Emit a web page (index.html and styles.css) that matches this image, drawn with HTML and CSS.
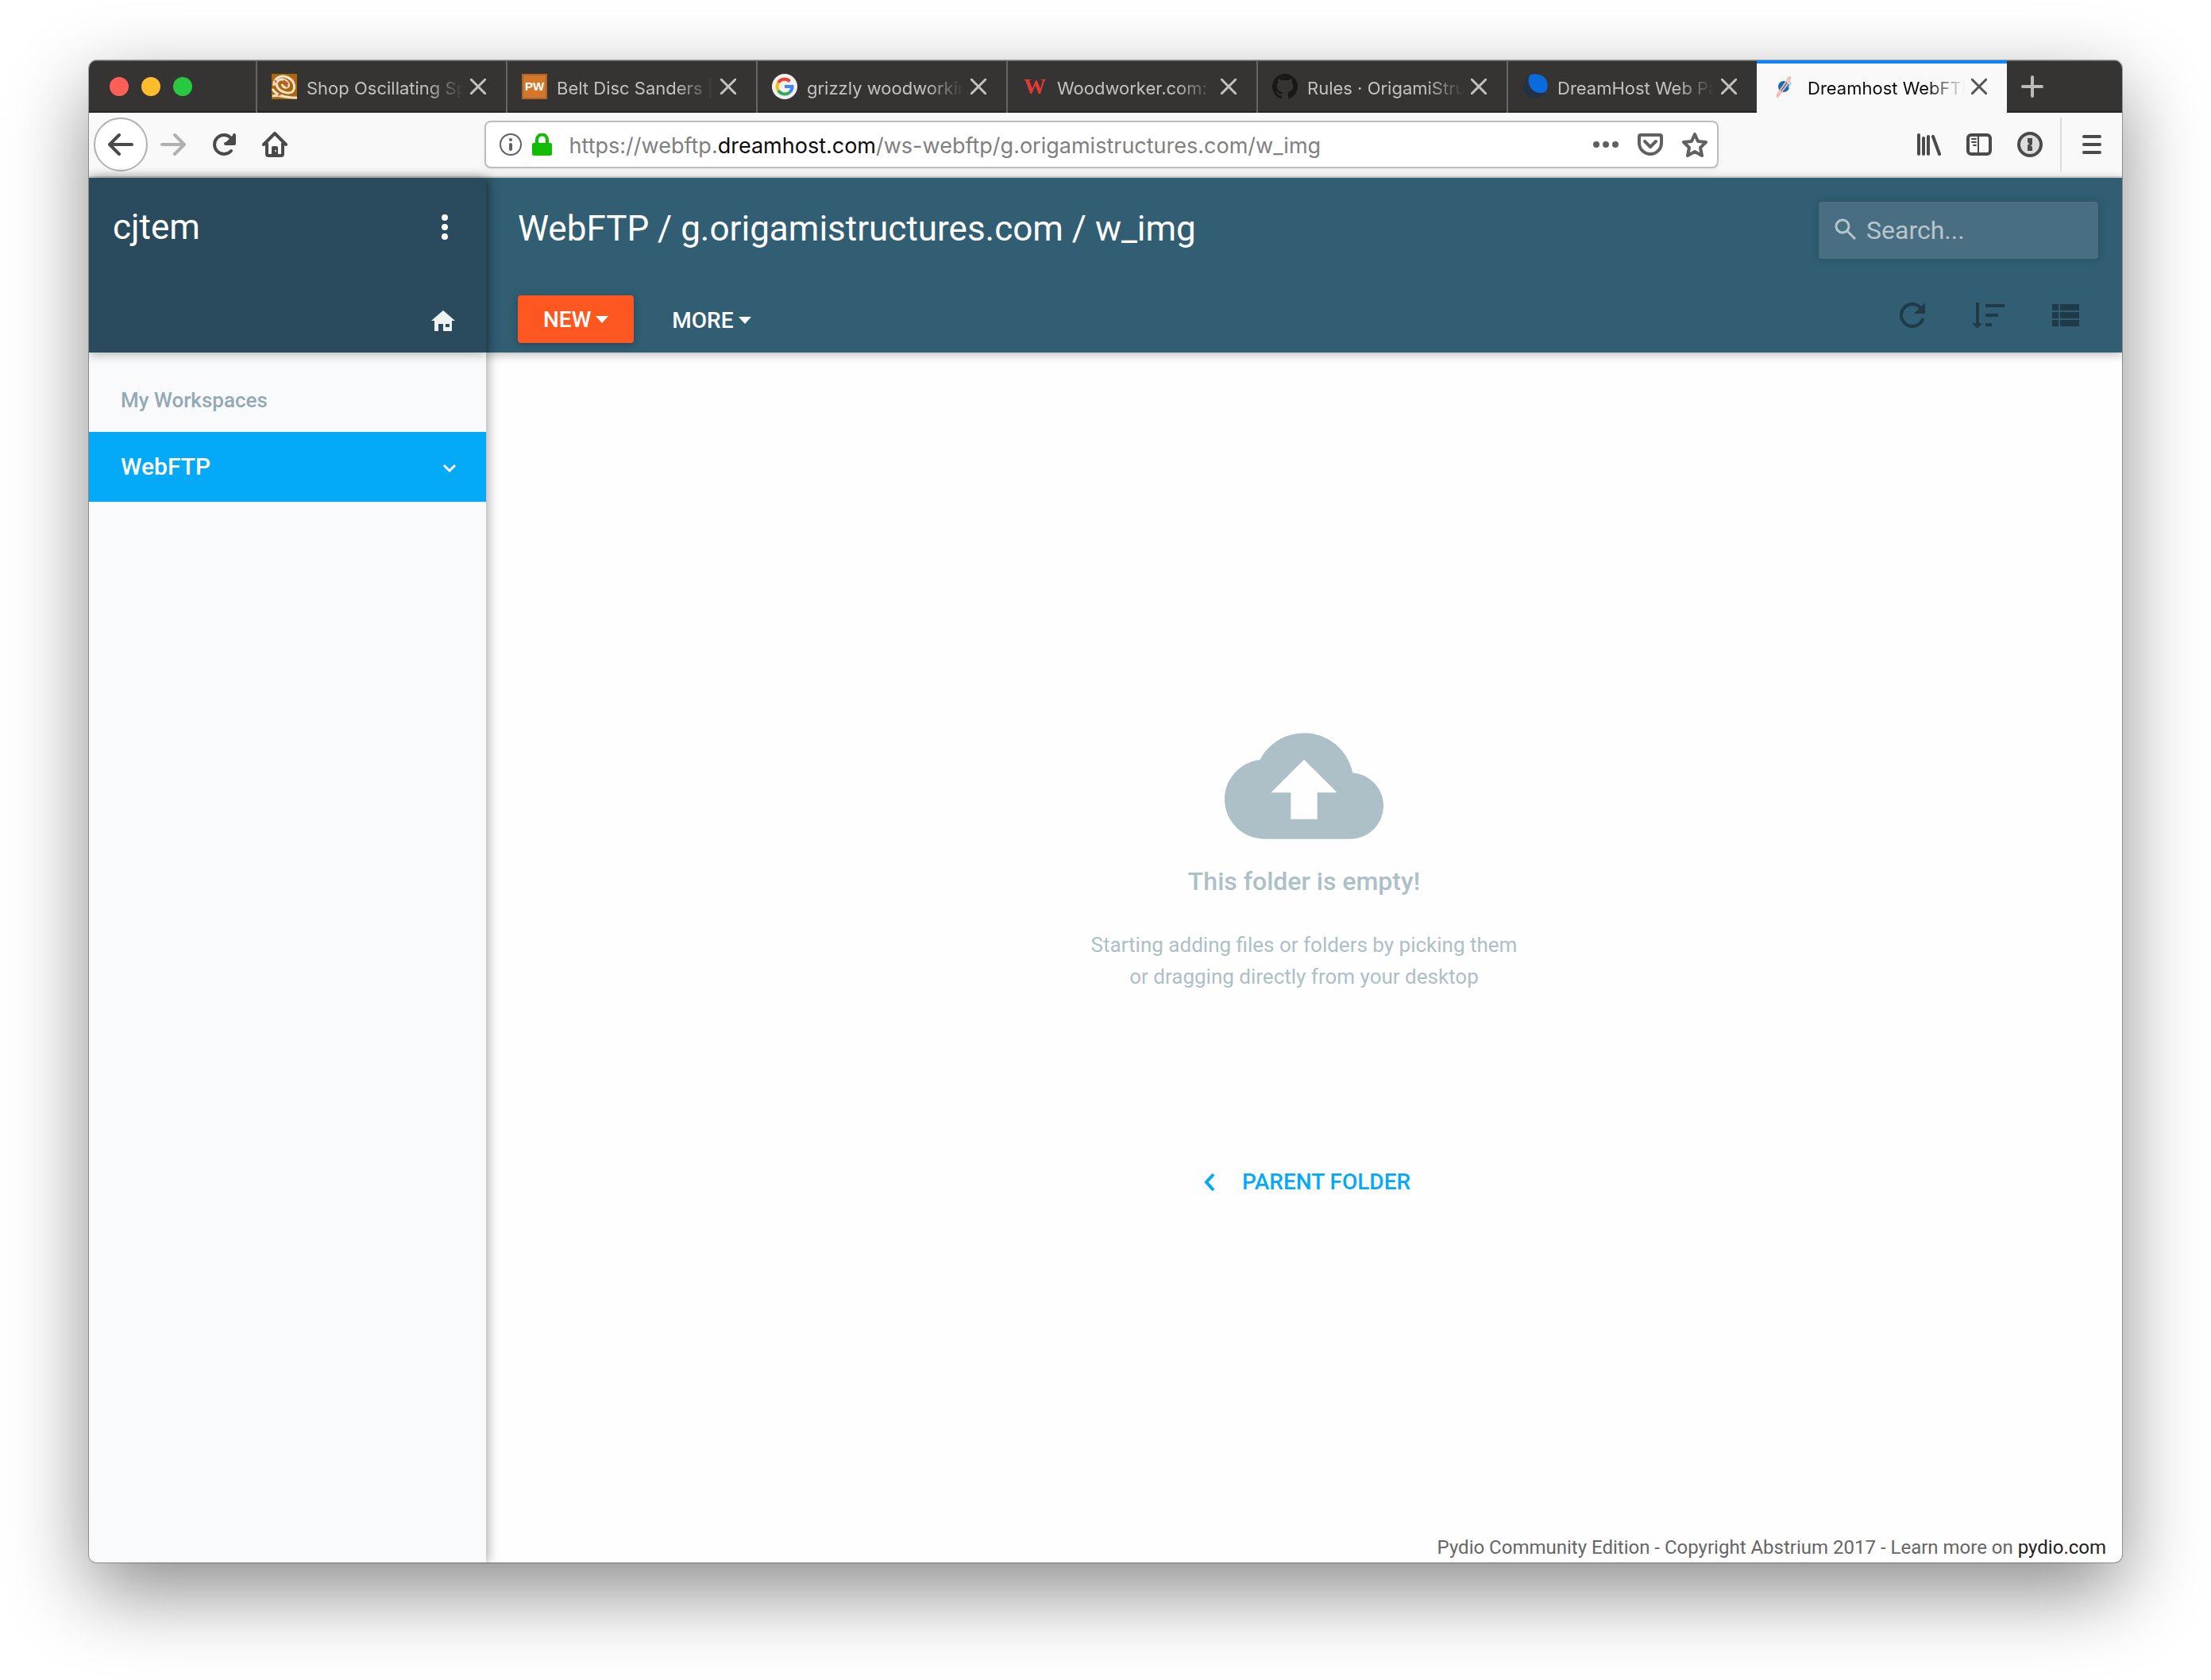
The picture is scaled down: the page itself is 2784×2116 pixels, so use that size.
FILE: index.html
```html
<!DOCTYPE html>
<html lang="en">
<head>
<meta charset="utf-8">
<title>Dreamhost WebFTP</title>
<link rel="stylesheet" href="styles.css">
</head>
<body>
<div class="window">
  <div class="tabbar">
    <div class="lights">
      <button class="light light-close" aria-label="Close window"></button>
      <button class="light light-min" aria-label="Minimise window"></button>
      <button class="light light-zoom" aria-label="Zoom window"></button>
    </div>
    <div class="tab">
      <svg class="favicon" viewBox="0 0 32 32"><rect width="32" height="32" fill="#a8690a"/><g fill="none" stroke="#f3e3cc" stroke-width="3"><path d="M3 15C2 5 12 1 19 4c8 3 11 10 9 16-3 7-17 4-21-4-3-7 4-11 10-8 5 3 6 8 2 9-3 1-5-1-6-4"/><path d="M1 19c3 5 8 8 14 9M1 28c9-2 20 3 31 2" /></g><path d="M15 8l5 4-1 5M4 8l2 3M27 4l2 4M8 27l4-2" stroke="#d9534a" stroke-width="2" fill="none"/></svg>
      <span class="tab-title">Shop Oscillating Sp</span>
      <button class="tab-close" aria-label="Close tab"><svg viewBox="0 0 20 20"><path d="M1 1l18 18M19 1L1 19"/></svg></button>
    </div>
    <div class="tab">
      <span class="favicon favicon-pw">PW</span>
      <span class="tab-title">Belt Disc Sanders |</span>
      <button class="tab-close" aria-label="Close tab"><svg viewBox="0 0 20 20"><path d="M1 1l18 18M19 1L1 19"/></svg></button>
    </div>
    <div class="tab">
      <svg class="favicon" viewBox="0 0 32 32"><circle cx="16" cy="16" r="16" fill="#f1f1f1"/><g fill="none" stroke-width="4"><path d="M22.500 9.500A9.500 9.500 0 0 0 8 11" stroke="#ea4335"/><path d="M8 11a9.500 9.500 0 0 0 0 10" stroke="#fbbc05"/><path d="M8 21a9.500 9.500 0 0 0 14 2.500" stroke="#34a853"/><path d="M22 23.500a9.500 9.500 0 0 0 3.500-7.500H16" stroke="#4285f4"/></g></svg>
      <span class="tab-title">grizzly woodworkin</span>
      <button class="tab-close" aria-label="Close tab"><svg viewBox="0 0 20 20"><path d="M1 1l18 18M19 1L1 19"/></svg></button>
    </div>
    <div class="tab">
      <span class="favicon favicon-w">W</span>
      <span class="tab-title">Woodworker.com:</span>
      <button class="tab-close" aria-label="Close tab"><svg viewBox="0 0 20 20"><path d="M1 1l18 18M19 1L1 19"/></svg></button>
    </div>
    <div class="tab">
      <svg class="favicon" viewBox="0 0 16 16"><path fill="#191717" d="M8 0C3.580 0 0 3.580 0 8c0 3.540 2.290 6.530 5.470 7.590.4.070.55-.17.55-.38 0-.19-.01-.82-.01-1.490-2.010.37-2.530-.49-2.690-.94-.09-.23-.48-.94-.82-1.130-.28-.15-.68-.52-.01-.53.63-.01 1.080.58 1.230.82.72 1.210 1.870.87 2.330.66.07-.52.28-.87.51-1.070-1.780-.2-3.640-.89-3.640-3.950 0-.87.31-1.590.82-2.150-.08-.2-.36-1.020.08-2.120 0 0 .67-.21 2.200.82.64-.18 1.320-.27 2-.27s1.360.09 2 .27c1.530-1.040 2.200-.82 2.200-.82.44 1.100.16 1.920.08 2.120.51.56.82 1.270.82 2.150 0 3.070-1.870 3.750-3.650 3.950.29.25.54.73.54 1.480 0 1.070-.01 1.930-.01 2.200 0 .21.15.46.55.38A8.010 8.010 0 0 0 16 8c0-4.420-3.580-8-8-8z"/></svg>
      <span class="tab-title">Rules · OrigamiStru</span>
      <button class="tab-close" aria-label="Close tab"><svg viewBox="0 0 20 20"><path d="M1 1l18 18M19 1L1 19"/></svg></button>
    </div>
    <div class="tab">
      <svg class="favicon" viewBox="0 0 32 32"><path fill="#233142" d="M9 2C1 8-1 17 3 24c5 8 18 10 26 0z"/><path fill="#0a6cdc" d="M9 2c7-4 18-1 21 6 3 6 2 12-2 15-6 3-14 0-18-6C7 12 7 6 9 2z"/></svg>
      <span class="tab-title">DreamHost Web Pa</span>
      <button class="tab-close" aria-label="Close tab"><svg viewBox="0 0 20 20"><path d="M1 1l18 18M19 1L1 19"/></svg></button>
    </div>
    <div class="tab tab-active">
      <svg class="favicon" viewBox="0 0 32 32"><circle cx="14" cy="16" r="7" fill="#0c6db3"/><path d="M20 9l3 3-3 5" stroke="#a9d3ee" stroke-width="2" fill="none"/><path d="M6 29c-2-2 3-8 6-12S21 3 22 4s-3 9-7 14-6 8-9 11z" fill="none" stroke="#f6b5ad" stroke-width="2"/></svg>
      <span class="tab-title">Dreamhost WebFTP</span>
      <button class="tab-close" aria-label="Close tab"><svg viewBox="0 0 20 20"><path d="M1 1l18 18M19 1L1 19"/></svg></button>
    </div>
    <button class="new-tab" aria-label="New tab"><svg viewBox="0 0 28 28"><path d="M14 2v24M2 14h24"/></svg></button>
  </div>

  <div class="navbar">
    <button class="nav-btn nav-back" aria-label="Back"><svg viewBox="0 0 32 32"><path d="M30 16H3M14 4L2 16l12 12"/></svg></button>
    <button class="nav-btn nav-forward" aria-label="Forward"><svg viewBox="0 0 32 32"><path d="M2 16h27M18 4l12 12-12 12"/></svg></button>
    <button class="nav-btn" aria-label="Reload"><svg viewBox="0 0 32 32"><path d="M25 24a12 12 0 1 1 0-16"/><path d="M29 4v11H18" /><path d="M28 5v9h-9z" fill="currentColor" stroke-width="2"/></svg></button>
    <button class="nav-btn" aria-label="Home"><svg viewBox="0 0 32 32"><path d="M2 16L16 2l14 14M6 15v13q0 2 2 2h16q2 0 2-2V15"/><path d="M12 30V20q0-2 2-2h4q2 0 2 2v10z" fill="currentColor" stroke="none"/><circle cx="17" cy="24" r="1" fill="#fff" stroke="none"/></svg></button>
    <span class="spacer"></span>
    <div class="urlbar">
      <svg class="icon-info" viewBox="0 0 28 28"><circle cx="14" cy="14" r="13" fill="none" stroke="#606060" stroke-width="2"/><circle cx="14" cy="8" r="2" fill="#606060"/><rect x="12" y="12" width="4" height="10" rx="2" fill="#606060"/></svg>
      <svg class="icon-lock" viewBox="0 0 25 28"><rect y="12" width="25" height="16" rx="2" fill="#12bc00"/><path d="M6 13V8a6 6 0 0 1 13 0v5" fill="none" stroke="#12bc00" stroke-width="4"/></svg>
      <div class="url-text">https://webftp.<b>dreamhost.com</b>/ws-webftp/g.origamistructures.com/w_img</div>
      <button class="url-btn" aria-label="Page actions"><svg viewBox="0 0 32 32"><g fill="currentColor" stroke="none"><circle cx="4" cy="16" r="4"/><circle cx="16" cy="16" r="4"/><circle cx="28" cy="16" r="4"/></g></svg></button>
      <button class="url-btn" aria-label="Save to Pocket"><svg viewBox="0 0 32 32"><path d="M4 4h24q2 0 2 2v8a14 14 0 0 1-28 0V6q0-2 2-2z"/><path d="M9 12l7 7 7-7"/></svg></button>
      <button class="url-btn" aria-label="Bookmark"><svg viewBox="0 0 32 32"><path d="M16 3l4 9 10 1-7 7 2 10-9-5-9 5 2-10-7-7 10-1z"/></svg></button>
    </div>
    <span class="spacer"></span>
    <button class="nav-btn" aria-label="Library"><svg viewBox="0 0 32 32"><path d="M4 4v24M10 8v20M16 6v22M22 6l8 22"/></svg></button>
    <button class="nav-btn" aria-label="Sidebars"><svg viewBox="0 0 32 32"><rect x="2" y="4" width="28" height="24" rx="4"/><path d="M15 4v24M7 9h5M7 13h5M9 17h3" stroke-width="2"/></svg></button>
    <button class="nav-btn" aria-label="1Password"><svg viewBox="0 0 32 32"><circle cx="16" cy="16" r="14" fill="#dcdcdc"/><path d="M13 8h6v8l-2 1 2 2v5h-6v-7l2-2-2-2z" fill="currentColor" stroke="none"/></svg></button>
    <span class="nav-sep"></span>
    <button class="nav-btn nav-menu" aria-label="Menu"><svg viewBox="0 0 32 32"><path d="M6 6h20M6 16h20M6 26h20"/></svg></button>
  </div>

  <div class="app">
    <aside class="side">
      <div class="side-head">
        <div class="side-row">
          <span class="user">cjtem</span>
          <button class="side-btn" aria-label="User menu"><svg viewBox="0 0 48 48"><circle cx="24" cy="12" r="4"/><circle cx="24" cy="24" r="4"/><circle cx="24" cy="36" r="4"/></svg></button>
        </div>
        <button class="side-btn side-home" aria-label="Home"><svg viewBox="0 0 30 26"><path d="M15 0l15 13h-4v13H15V17H9v9H4V13H0zM18 17h5v4h-5z" fill-rule="evenodd"/></svg></button>
      </div>
      <h2 class="side-label">My Workspaces</h2>
      <a class="workspace" href="#webftp">WebFTP
        <svg viewBox="0 0 16 10"><path d="M1 1l7 7 7-7"/></svg>
      </a>
    </aside>
    <div class="main">
      <header class="head">
        <div class="head-row">
          <h1 class="crumbs">WebFTP / g.origamistructures.com / w_img</h1>
          <label class="search">
            <svg viewBox="0 0 27 27"><circle cx="10" cy="10" r="8"/><path d="M16 16l10 10"/></svg>
            <input type="search" placeholder="Search..." aria-label="Search">
          </label>
        </div>
        <div class="head-tools">
          <button class="btn-new">NEW<span class="caret"></span></button>
          <button class="btn-more">MORE<span class="caret"></span></button>
          <span class="fill"></span>
          <button class="tool" aria-label="Refresh"><svg viewBox="0 0 24 24"><path d="M17.650 6.350C16.200 4.900 14.210 4 12 4A8 8 0 0 0 4 12a8 8 0 0 0 8 8c3.730 0 6.840-2.550 7.730-6h-2.080c-.82 2.330-3.040 4-5.650 4a6 6 0 0 1-6-6 6 6 0 0 1 6-6c1.660 0 3.140.69 4.220 1.780L13 11h7V4l-2.350 2.350z"/></svg></button>
          <button class="tool" aria-label="Sort"><svg viewBox="0 0 24 24"><path d="M4 4h2v13h2L5 20.500 1.500 17H4zM10 5h12v2H10zM10 11h8v2h-8zM10 17h4v2h-4z"/></svg></button>
          <button class="tool" aria-label="List view"><svg viewBox="0 0 24 24"><path d="M9 5v4h12V5M9 19h12v-4H9M9 14h12v-4H9M4 9h4V5H4M4 14h4v-4H4M4 19h4v-4H4z"/></svg></button>
        </div>
      </header>
      <main class="empty">
        <svg class="cloud" viewBox="0 0 24 24"><path d="M14 13v4h-4v-4H7l5-5 5 5m2.350-2.970C18.670 6.590 15.640 4 12 4 9.110 4 6.600 5.640 5.350 8.030 2.340 8.360 0 10.900 0 14a6 6 0 0 0 6 6h13a5 5 0 0 0 5-5c0-2.640-2.050-4.780-4.650-4.970z"/></svg>
        <h3 class="empty-title">This folder is empty!</h3>
        <p class="empty-text">Starting adding files or folders by picking them<br>or dragging directly from your desktop</p>
        <a class="parent" href="#parent"><svg viewBox="0 0 14 24"><path d="M12 2L3 12l9 10"/></svg>PARENT FOLDER</a>
      </main>
      <footer class="foot">Pydio Community Edition - Copyright Abstrium 2017 - Learn more on <a href="#pydio">pydio.com</a></footer>
    </div>
  </div>
</div>
</body>
</html>
```
FILE: styles.css
```css
* { box-sizing: border-box; }

body {
  margin: 0;
  min-height: 100vh;
  padding: 76px 112px 148px;
  display: flex;
  background: #fff;
  font-family: Roboto, sans-serif;
}

button {
  margin: 0;
  padding: 0;
  border: 0;
  background: none;
  color: inherit;
  font: inherit;
}

a { color: inherit; text-decoration: none; }
h1, h2, h3, p { margin: 0; font-weight: 400; }
svg { display: block; flex: none; }

.window {
  flex: 1;
  min-width: 0;
  display: flex;
  flex-direction: column;
  overflow: hidden;
  border-radius: 10px;
  background: #fefefe;
  box-shadow: 0 0 0 1px rgba(0, 0, 0, .3), 0 36px 100px rgba(0, 0, 0, .46);
}

/* Tab strip */
.tabbar {
  height: 66px;
  display: flex;
  background: #363432;
  box-shadow: inset 0 -2px #252423, inset 0 1px #6a6968;
  font: 22px/32px Inter, sans-serif;
  color: #c3c2c1;
}
.lights { width: 210px; padding-left: 26px; display: flex; align-items: center; gap: 16px; }
.light { width: 24px; height: 24px; border-radius: 50%; }
.light-close { background: #ff5f57; }
.light-min { background: #ffbd2e; }
.light-zoom { background: #28c940; }

.tab {
  flex: 0 1 315px;
  min-width: 0;
  padding: 0 25px 0 18px;
  display: flex;
  align-items: center;
  border-left: 2px solid #666564;
}
.favicon { width: 32px; height: 32px; margin-right: 12px; flex: none; }
.favicon-pw {
  border: 2px solid #b0652a;
  background: #d5772a;
  color: #fff;
  font: bold 15px/28px "Liberation Sans", sans-serif;
  text-align: center;
}
.favicon-w { color: #e23b36; font: bold 28px/32px "Liberation Serif", serif; text-align: center; }
.tab-title {
  flex: 1;
  padding-top: 3px;
  overflow: hidden;
  white-space: nowrap;
  -webkit-mask-image: linear-gradient(to left, transparent, #000 48px);
  mask-image: linear-gradient(to left, transparent, #000 48px);
}
.tab-close { margin-left: 8px; }
.tab-close svg { width: 20px; height: 20px; fill: none; stroke: currentColor; stroke-width: 3; stroke-linecap: round; }
.tab-active {
  border-left: 0;
  padding-left: 20px;
  background: #f9f9fa;
  box-shadow: inset 0 4px #0a84ff;
  color: #0c0c0d;
}
.tab-active .tab-close { color: #555; }
.new-tab { padding: 0 18px; }
.new-tab svg { width: 28px; height: 28px; fill: none; stroke: #bbb; stroke-width: 4; stroke-linecap: round; }

/* Navigation bar */
.navbar {
  height: 82px;
  padding: 0 6px;
  display: flex;
  align-items: center;
  background: #f9f9fa;
  border-bottom: 2px solid #dcdcdd;
  color: #4a4a4a;
}
.nav-btn { width: 64px; height: 68px; display: flex; align-items: center; justify-content: center; flex: none; }
.nav-btn svg, .url-btn svg { width: 32px; height: 32px; fill: none; stroke: currentColor; stroke-width: 4; stroke-linecap: round; stroke-linejoin: round; }
.nav-back { width: 68px; border: 2px solid #b1b1b1; border-radius: 50%; background: #fff; }
.nav-forward { color: #b0b0b0; }
.spacer { flex: 7; }
.urlbar {
  flex: 46;
  height: 60px;
  padding: 0 12px 0 17px;
  display: flex;
  align-items: center;
  border: 2px solid #bdbdbd;
  border-radius: 8px;
  background: #fff;
  box-shadow: 0 2px 6px rgba(0, 0, 0, .06);
  color: #606060;
}
.icon-info { width: 28px; height: 28px; margin-right: 13px; }
.icon-lock { width: 25px; height: 28px; margin-right: 22px; }
.url-text { flex: 1; padding-top: 3px; font: 27px/32px Inter, sans-serif; color: #808080; white-space: nowrap; }
.url-text b { font-weight: 400; color: #0c0c0d; }
.url-btn { margin-left: 24px; }
.nav-sep { width: 2px; height: 68px; margin: 0 6px; background: #dcdcdd; }

/* Application */
.app { flex: 1; display: flex; }
.side { position: relative; z-index: 1; width: 500px; background: #f9fafc; box-shadow: 2px 0 14px rgba(0, 0, 0, .35); }
.side-head {
  height: 220px;
  padding: 32px 28px 0 30px;
  background: #294b5d;
  box-shadow: 0 2px 12px rgba(0, 0, 0, .3);
  color: #fff;
}
.side-row { height: 60px; display: flex; align-items: center; justify-content: space-between; }
.user { font-size: 44px; line-height: 60px; }
.side-btn svg { width: 48px; height: 48px; fill: #fff; }
.side-home { display: block; margin: 75px 11px 0 auto; }
.side-home svg { width: 30px; height: 26px; fill: #eef2f3; }
.side-label { padding: 40px 40px 20px; font-size: 26px; line-height: 40px; font-weight: 500; color: #93a9b4; }
.workspace {
  height: 88px;
  padding: 0 38px 2px 40px;
  display: flex;
  align-items: center;
  justify-content: space-between;
  background: #04a9f7;
  color: #fff;
  font-size: 30px;
  font-weight: 500;
}
.workspace svg { width: 16px; height: 10px; margin-top: 6px; fill: none; stroke: #fff; stroke-width: 3; }

.main { flex: 1; display: flex; flex-direction: column; }
.head {
  height: 220px;
  padding: 30px 24px 0 40px;
  background: #315e73;
  box-shadow: 0 2px 12px rgba(0, 0, 0, .3);
  color: #fff;
}
.head-row { height: 72px; display: flex; align-items: center; justify-content: space-between; padding-right: 6px; }
.crumbs { padding-bottom: 4px; font-size: 44px; line-height: 60px; }
.search {
  width: 352px;
  height: 72px;
  padding: 0 20px;
  display: flex;
  align-items: center;
  gap: 13px;
  border-radius: 4px;
  background: #496e82;
  box-shadow: 0 0 12px rgba(0, 0, 0, .18);
}
.search svg { width: 27px; height: 27px; margin-bottom: 4px; fill: none; stroke: #b7c5cd; stroke-width: 3; }
.search input {
  width: 100%;
  padding: 0;
  border: 0;
  outline: 0;
  background: none;
  font: 32px/40px Roboto, sans-serif;
  color: #fff;
}
.search input::placeholder { color: #b7c5cd; opacity: 1; }
.head-tools { margin-top: 46px; height: 60px; display: flex; align-items: center; font-size: 28px; font-weight: 500; }
.btn-new, .btn-more { height: 60px; display: flex; align-items: center; }
.btn-new { padding: 0 32px; border-radius: 4px; background: #ff5722; box-shadow: 0 2px 10px rgba(0, 0, 0, .25); }
.btn-more { margin-left: 48px; padding-top: 2px; }
.caret { margin-left: 6px; border: 8px solid transparent; border-top: 9px solid #fff; border-bottom: 0; }
.fill { flex: 1; }
.tool { width: 96px; height: 60px; padding-top: 1px; display: flex; align-items: flex-start; justify-content: center; }
.tool svg { width: 48px; height: 48px; fill: #1f3b49; }

.empty {
  flex: 1;
  padding-top: 446px;
  display: flex;
  flex-direction: column;
  align-items: center;
  text-align: center;
  color: #adbfc7;
}
.cloud { width: 200px; height: 200px; fill: #adbfc7; }
.empty-title { font-size: 32px; line-height: 40px; font-weight: 500; }
.empty-text { margin-top: 40px; font-size: 26px; line-height: 40px; }
.parent {
  margin-top: 219px;
  padding-left: 8px;
  display: flex;
  align-items: center;
  gap: 34px;
  font-size: 28px;
  line-height: 40px;
  font-weight: 500;
  color: #04a9f7;
}
.parent svg { width: 14px; height: 24px; fill: none; stroke: currentColor; stroke-width: 4; }
.foot { padding: 0 20px 3px; text-align: right; font-size: 24px; line-height: 32px; color: #666; }
.foot a { color: #222; }
```
